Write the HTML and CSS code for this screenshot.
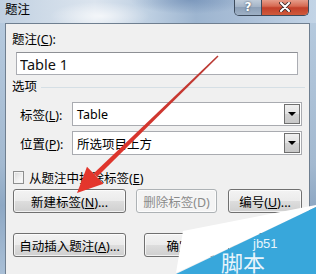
FILE: index.html
```html
<!DOCTYPE html>
<html lang="zh-CN">
<head>
    <meta charset="UTF-8">
    <meta name="viewport" content="width=device-width, initial-scale=1.0">
    <title>题注</title>
    <link rel="stylesheet" href="styles.css">
</head>
<body>
    <div class="window">
        <div class="titlebar">
            <span class="title">题注</span>
            <div class="caption-buttons">
                <span class="cap-btn help">?</span>
                <span class="cap-btn close">
                    <svg width="12" height="10" viewBox="0 0 12 10">
                        <path d="M2 1 L10 9 M10 1 L2 9" stroke="#3a2a2a" stroke-width="3.6" stroke-linecap="round"/>
                        <path d="M2 1 L10 9 M10 1 L2 9" stroke="#fff" stroke-width="2" stroke-linecap="round"/>
                    </svg>
                </span>
            </div>
        </div>

        <div class="client">
            <div class="field-label">题注(<u>C</u>):</div>
            <input type="text" class="caption-input" value="Table 1">

            <!-- 选项 -->
            <div class="group-title">选项</div>

            <div class="combo-row">
                <span class="combo-label">标签(<u>L</u>):</span>
                <div class="combo">
                    <span class="combo-text">Table</span>
                    <span class="combo-arrow"></span>
                </div>
            </div>
            <div class="combo-row second">
                <span class="combo-label">位置(<u>P</u>):</span>
                <div class="combo">
                    <span class="combo-text">所选项目上方</span>
                    <span class="combo-arrow"></span>
                </div>
            </div>

            <div class="check-row">
                <span class="checkbox"></span>
                <span>从题注中排除标签(<u>E</u>)</span>
            </div>

            <div class="btn-row">
                <button class="btn w-wide">新建标签(<u>N</u>)...</button>
                <button class="btn w-mid disabled">删除标签(D)</button>
                <button class="btn w-small">编号(<u>U</u>)...</button>
            </div>
            <div class="btn-row second">
                <button class="btn w-wide">自动插入题注(<u>A</u>)...</button>
                <button class="btn w-ok">确定</button>
                <button class="btn w-small">关闭</button>
            </div>
        </div>

        <!-- arrow and watermark lie over the dialog -->
        <svg class="overlay" width="316" height="274" viewBox="0 0 316 274">
            <defs>
                <linearGradient id="arrowFill" x1="218" y1="56" x2="78" y2="192" gradientUnits="userSpaceOnUse">
                    <stop offset="0" stop-color="#b83a34"/>
                    <stop offset="0.6" stop-color="#d8352d"/>
                    <stop offset="1" stop-color="#e6362c"/>
                </linearGradient>
            </defs>
            <polygon points="218.5,56.5 217.5,55.5 93.8,173.2 97.2,176.8" fill="url(#arrowFill)"/>
            <polygon points="77,193 103.5,183.8 87,166.8" fill="url(#arrowFill)"/>

            <polygon points="183,231 316,205 316,207 176,273" fill="#ffffff"/>
            <polygon points="176,274 316,207 316,274" fill="#38a7db"/>
            <text class="wm-small" x="253" y="248">jb51</text>
            <text class="wm-big" x="221" y="271">脚本</text>
        </svg>
    </div>
</body>
</html>
```

FILE: styles.css
```css
* {
    box-sizing: border-box;
}

html, body {
    margin: 0;
    padding: 0;
    width: 316px;
    height: 274px;
    overflow: hidden;
    font-family: "Noto Sans", "Noto Sans CJK SC", sans-serif;
    font-size: 12.5px;
    color: #000;
}

.window {
    position: relative;
    width: 316px;
    height: 274px;
    background: linear-gradient(180deg, #b8cce0 0%, #a3b9d0 60%, #8ea8c4 75%, #a9bfd6 100%);
}

.titlebar {
    height: 23px;
    display: flex;
    justify-content: space-between;
    align-items: flex-start;
    background:
        radial-gradient(ellipse 50px 14px at 100px 16px, rgba(255, 255, 255, 0.7), rgba(255, 255, 255, 0)),
        radial-gradient(ellipse 60px 14px at 190px 0, rgba(110, 140, 180, 0.7), rgba(110, 140, 180, 0)),
        linear-gradient(90deg, #c0d0e1 0%, #cfdbe8 15%, #dbe4ee 30%, #bccee1 48%, #9db5d0 62%, #a8bdd6 75%, #c3d4e6 100%);
}

.title {
    padding-left: 5px;
    line-height: 20px;
}

.caption-buttons {
    display: flex;
    margin-right: 7px;
    margin-top: -1px;
    border: 1px solid #3d4b5c;
    border-top: none;
    border-radius: 0 0 5px 5px;
    overflow: hidden;
}

.cap-btn {
    height: 16px;
    display: flex;
    justify-content: center;
    align-items: center;
}

.help {
    width: 27px;
    border-right: 1px solid #3d4b5c;
    background: linear-gradient(180deg, #c4d0dd 0%, #a3b3c6 50%, #8c9fb6 51%, #9eb0c5 100%);
    color: #fff;
    font-family: "DejaVu Sans", sans-serif;
    font-weight: bold;
    font-size: 12px;
    text-shadow: 0 0 2px #2c3a4c;
}

.close {
    width: 46px;
    background: linear-gradient(180deg, #e8a593 0%, #d66a52 45%, #c2402a 55%, #d05a3c 100%);
}

.client {
    margin: 0 6px 0 5px;
    height: 251px;
    border: 1px solid #6f7f90;
    border-bottom: none;
    background: #f0f0f0;
    padding-left: 6px;
}

.field-label {
    margin-top: 8px;
    line-height: 16px;
}

.caption-input {
    display: block;
    margin: 4px 0 0 4px;
    width: 282px;
    height: 23px;
    padding: 0 3px;
    border: 1px solid #abadb3;
    border-top-color: #8e9095;
    background: #fff;
    font-family: "Noto Sans", sans-serif;
    font-size: 14.5px;
    color: #111;
    outline: none;
}

/* options section with its separator line */
.group-title {
    margin-top: 4px;
    height: 16px;
    line-height: 16px;
    display: flex;
    align-items: center;
    gap: 4px;
    margin-right: 4px;
}

.group-title::after {
    content: '';
    flex: 1;
    height: 1px;
    background: #d5dfe5;
}

.combo-row {
    margin-top: 7px;
    display: flex;
    align-items: center;
    padding-left: 8px;
}

.combo-row.second {
    margin-top: 5px;
}

.combo-label {
    width: 52px;
}

.combo {
    width: 230px;
    height: 24px;
    border: 1px solid #a9abb0;
    background: #fff;
    display: flex;
    align-items: center;
    justify-content: space-between;
    padding: 1px;
}

.combo-text {
    padding-left: 3px;
}

.combo-arrow {
    width: 16px;
    height: 100%;
    border: 1px solid #6f6f6f;
    background: linear-gradient(180deg, #f0f0f0 0%, #e2e2e2 50%, #d2d2d2 51%, #c8c8c8 100%);
    display: flex;
    justify-content: center;
    align-items: center;
}

.combo-arrow::after {
    content: '';
    border-left: 4px solid transparent;
    border-right: 4px solid transparent;
    border-top: 4px solid #000;
}

.check-row {
    margin-top: 15px;
    height: 14px;
    display: flex;
    align-items: center;
    gap: 5px;
    padding-left: 1px;
}

.checkbox {
    width: 11px;
    height: 13px;
    border: 1px solid #8e8f8f;
    background: linear-gradient(135deg, #d8d8d8 0%, #f2f2f2 60%, #fff 100%);
    box-shadow: inset 0 0 0 1px #f4f4f4;
}

.btn-row {
    margin-top: 5px;
    display: flex;
    padding-left: 1px;
}

.btn-row.second {
    margin-top: 20px;
}

.btn {
    height: 24px;
    padding: 0;
    border: 1px solid #707070;
    border-radius: 3px;
    background: linear-gradient(180deg, #f3f3f3 0%, #ebebeb 50%, #dddddd 51%, #cfcfcf 100%);
    box-shadow: inset 0 0 0 1px rgba(255, 255, 255, 0.7);
    font-family: inherit;
    font-size: 12.5px;
    color: #000;
    text-align: center;
}

.btn.disabled {
    border-color: #adb2b5;
    background: #f4f4f4;
    color: #8a8a8a;
}

.w-wide {
    width: 113px;
}

.w-mid {
    width: 81px;
    margin-left: 10px;
}

.w-small {
    width: 74px;
    margin-left: 11px;
}

.w-ok {
    width: 70px;
    margin-left: 18px;
}

.btn-row.second .w-small {
    margin-left: 14px;
}

.overlay {
    position: absolute;
    top: 0;
    left: 0;
    pointer-events: none;
}

.wm-small {
    font-family: "Liberation Sans", sans-serif;
    font-size: 13px;
    fill: #e9f5fb;
}

.wm-big {
    font-family: "Noto Sans CJK SC", sans-serif;
    font-size: 22px;
    fill: #e9f5fb;
}
```
